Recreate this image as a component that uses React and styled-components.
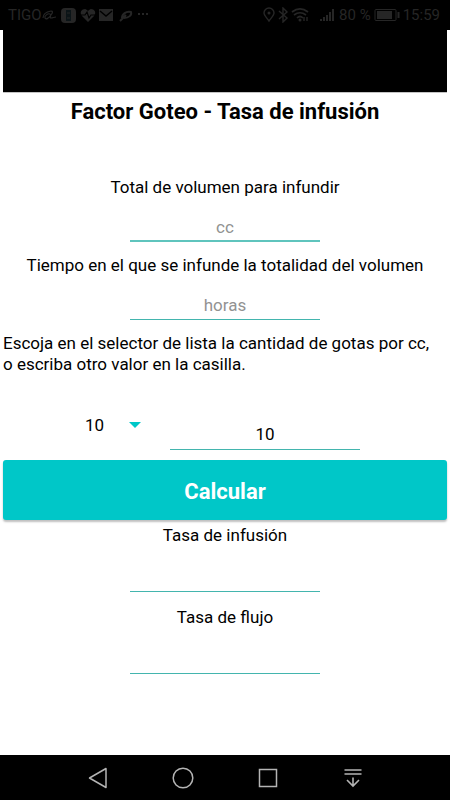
import React, {useState} from "react";
import styled, {createGlobalStyle} from 'styled-components'

const GlobalStyle = createGlobalStyle`
* {
    box-sizing: border-box;
}
body {
    margin: 0;
    background: #fff;
    color: #000;
    font-family: Roboto, "Liberation Sans", sans-serif;
}
input, select, button {
    font-family: inherit;
    border-radius: 0;
}
`

const teal = "#00c7c8"

const Screen = styled.div`
display: flex;
flex-direction: column;
min-height: 100vh;
`

const StatusBar = styled.header`
display: flex;
align-items: center;
justify-content: space-between;
height: 30px;
padding: 0 10px 0 8px;
background: #000;
color: #262626;
font-size: 15px;
line-height: 18px;
`

const StatusGroup = styled.div`
display: flex;
align-items: center;
gap: ${props => props.$gap}px;

svg {
    display: block;
}
`

const Content = styled.main`
flex: 1;
padding: 0 3px;
`

const Banner = styled.div`
height: 62px;
background: #000;
box-shadow: 0 1px 0 #c4c4c4;
`

const Title = styled.h1`
margin: 0 0 45px;
font-size: 22px;
font-weight: 700;
line-height: 40px;
text-align: center;
`

const Field = styled.div`
display: flex;
flex-direction: column;
align-items: center;
margin-bottom: ${props => props.$tall ? 15 : 13}px;
`

const Label = styled.label`
font-size: 17px;
line-height: 21px;
text-align: center;
`

const TextInput = styled.input`
width: 190px;
height: ${props => props.$tall ? 46 : 44}px;
padding: 15px 0 0;
border: 0;
border-bottom: ${props => props.$active ? "2px solid #5fc4bd" : "1px solid #43b5ae"};
outline: none;
background: transparent;
color: #000;
font-size: 17px;
text-align: center;

&::placeholder {
    color: #929292;
    opacity: 1;
}
`

const Hint = styled.p`
margin: 0;
font-size: 17px;
line-height: 21px;
`

const DropRow = styled.div`
display: flex;
align-items: flex-start;
justify-content: center;
gap: 10px;
margin: 29px 0 10px;
padding-right: 10px;
`

const SpinnerWrap = styled.div`
display: flex;
align-items: center;
width: 80px;
height: 42px;
`

const Spinner = styled.select`
width: 100%;
height: 40px;
margin-right: -31px;
padding: 0 0 0 5px;
appearance: none;
border: 0;
outline: none;
background: transparent;
color: #000;
font-size: 17px;
`

const Arrow = styled.svg`
flex: none;
margin-right: 19px;
pointer-events: none;
`

const CalcButton = styled.button`
display: block;
width: 100%;
height: 60px;
margin-bottom: 5px;
padding: 2px 0 0;
border: 0;
background: ${teal};
box-shadow: 0 2px 2px rgba(0,0,0,0.25);
color: #fff;
font-size: 22px;
font-weight: 700;

&& {
    border-radius: 3px;
}
`

const NavBar = styled.nav`
display: flex;
justify-content: center;
gap: 61px;
height: 45px;
background: #000;
`

const NavButton = styled.button`
display: flex;
align-items: center;
justify-content: center;
width: 24px;
padding: 0;
border: 0;
background: transparent;
color: #b4b4b4;

svg {
    flex: none;
}
`

function NotificationIcons() {
    return (
        <svg width="108" height="16" viewBox="0 0 108 16" fill="none" stroke="currentColor" strokeWidth="1.2">
            <path d="M1 11c0-3 3-6 8-7M9 4c2 0 2 1 0 4s-5 5-6 3 3-5 5-4-1 4 1 4 3-1 5-1" />
            <rect x="19" y="1" width="15" height="15" rx="4" fill="currentColor" stroke="none" />
            <path d="M24 3h5v11h-5z" fill="#0b1417" stroke="none" />
            <path d="M25 6h3M25 11h3" />
            <path d="M46 15l-6-6c-3-4 0-7 3-7 1 0 2 1 3 2 1-1 2-2 3-2 3 0 6 3 3 7z" fill="currentColor" stroke="none" />
            <path d="M38 8h5l2-3 2 6 2-3h5" stroke="#000" />
            <path d="M57 2h14v12H57z" fill="currentColor" stroke="none" />
            <path d="M58 4l6 5 6-5" stroke="#000" strokeWidth="1.5" />
            <path d="M78 14l6-6M80 11c0-4 4-7 9-6 1 3-2 6-7 6" strokeWidth="2" />
            <path d="M96 7h2M100 7h2M104 7h2" strokeWidth="2" />
        </svg>
    )
}

function SignalIcons() {
    return (
        <svg width="73" height="16" viewBox="0 0 73 16" fill="none" stroke="currentColor" strokeWidth="1.4">
            <path d="M6 14C3 10 1 8 1 6a5 5 0 0 1 10 0c0 2-2 4-5 8z" />
            <circle cx="6" cy="6" r="1.5" fill="currentColor" stroke="none" />
            <path d="M16 4l8 7-4 4V1l4 4-8 7" />
            <path d="M29 5c5-4 11-4 16 0M31 8c4-3 8-3 12 0M34 11c2-2 4-2 6 0" strokeWidth="1.7" />
            <circle cx="37" cy="13" r="1.5" fill="currentColor" stroke="none" />
            <path d="M41 10v4M44 10v4" />
            <path d="M58 14v-2M61 14v-4M64 14V8M67 14V5M70 14V2" strokeWidth="2" />
        </svg>
    )
}

function BatteryIcon() {
    return (
        <svg width="26" height="14" viewBox="0 0 26 14" fill="none" stroke="currentColor">
            <rect x="1" y="1.5" width="21" height="11" rx="1" />
            <path d="M3 3h15v8H3z" fill="currentColor" stroke="none" />
            <path d="M24.5 4v6" strokeWidth="2" />
        </svg>
    )
}

function LabeledField({id, label, $tall, ...rest}) {
    return (
        <Field $tall={$tall}>
            <Label htmlFor={id}>{label}</Label>
            <TextInput id={id} type="text" $tall={$tall} {...rest} />
        </Field>
    )
}

export default function App() {
    const [volume, setVolume] = useState("")
    const [hours, setHours] = useState("")
    const [drops, setDrops] = useState("10")
    const [rate, setRate] = useState("")
    const [flow, setFlow] = useState("")

    const calculate = () => {
        const v = parseFloat(volume)
        const h = parseFloat(hours)
        const d = parseFloat(drops)
        if (!v || !h || !d) return
        setRate((v / h).toFixed(2))
        setFlow((v * d / (h * 60)).toFixed(2))
    }

    return (
        <Screen>
            <GlobalStyle />
            <StatusBar>
                <StatusGroup $gap={0}>
                    <span>TIGO</span>
                    <NotificationIcons />
                </StatusGroup>
                <StatusGroup $gap={3}>
                    <SignalIcons />
                    <span>80 %</span>
                    <BatteryIcon />
                    <span>15:59</span>
                </StatusGroup>
            </StatusBar>
            <Content>
                <Banner />
                <Title>Factor Goteo - Tasa de infusión</Title>
                <LabeledField id="volume" label="Total de volumen para infundir" placeholder="cc" $active
                    value={volume} onChange={e => setVolume(e.target.value)} />
                <LabeledField id="hours" label="Tiempo en el que se infunde la totalidad del volumen" placeholder="horas"
                    value={hours} onChange={e => setHours(e.target.value)} />
                <Hint id="drops-hint">
                    Escoja en el selector de lista la cantidad de gotas por cc,
                    <br />
                    o escriba otro valor en la casilla.
                </Hint>
                <DropRow>
                    <SpinnerWrap>
                        <Spinner aria-labelledby="drops-hint" value={drops} onChange={e => setDrops(e.target.value)}>
                            <option>10</option>
                            <option>15</option>
                            <option>20</option>
                            <option>60</option>
                        </Spinner>
                        <Arrow width="12" height="6" viewBox="0 0 12 6">
                            <path d="M0 0h12L6 6z" fill={teal} />
                        </Arrow>
                    </SpinnerWrap>
                    <TextInput aria-labelledby="drops-hint" type="text" $tall
                        value={drops} onChange={e => setDrops(e.target.value)} />
                </DropRow>
                <CalcButton type="button" onClick={calculate}>Calcular</CalcButton>
                <LabeledField id="rate" label="Tasa de infusión" readOnly $tall value={rate} />
                <LabeledField id="flow" label="Tasa de flujo" readOnly $tall value={flow} />
            </Content>
            <NavBar>
                <NavButton type="button" aria-label="Atrás">
                    <svg width="20" height="22" viewBox="0 0 20 22" fill="none" stroke="currentColor" strokeWidth="1.5">
                        <path d="M18 1.5v19L1.5 11z" strokeLinejoin="round" />
                    </svg>
                </NavButton>
                <NavButton type="button" aria-label="Inicio">
                    <svg width="22" height="22" viewBox="0 0 22 22" fill="none" stroke="currentColor" strokeWidth="1.5">
                        <circle cx="11" cy="11" r="9.8" />
                    </svg>
                </NavButton>
                <NavButton type="button" aria-label="Recientes">
                    <svg width="20" height="20" viewBox="0 0 20 20" fill="none" stroke="currentColor" strokeWidth="1.5">
                        <rect x="1.5" y="1.5" width="17" height="17" />
                    </svg>
                </NavButton>
                <NavButton type="button" aria-label="Notificaciones">
                    <svg width="18" height="20" viewBox="0 0 18 20" fill="none" stroke="currentColor" strokeWidth="1.6">
                        <path d="M0.5 2h17M0.5 6h17M9 9.5v9M3 12l6 6 6-6" />
                    </svg>
                </NavButton>
            </NavBar>
        </Screen>
    )
}
